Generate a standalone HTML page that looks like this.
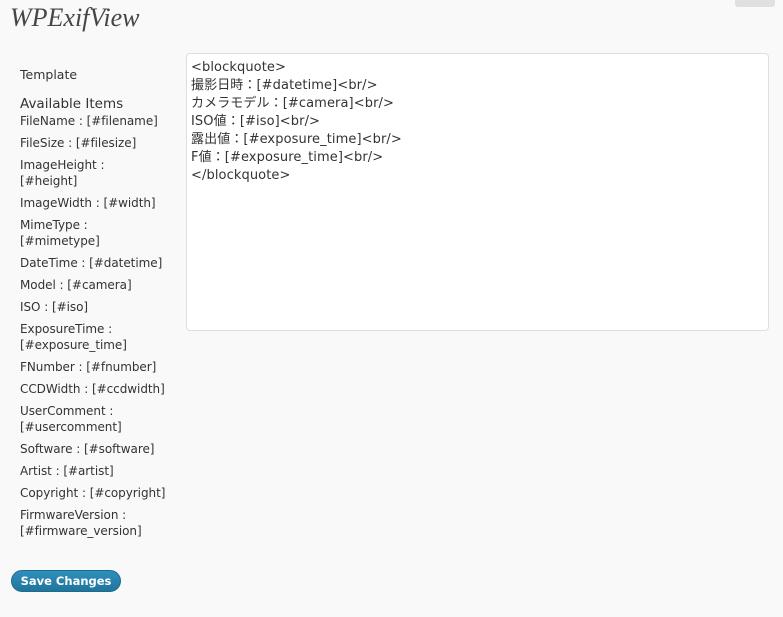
<!DOCTYPE html>
<html><head><meta charset="utf-8"><style>
body{margin:0;background:#f9f9f9;width:783px;height:617px;overflow:hidden;position:relative;font-family:"DejaVu Sans","Noto Sans CJK JP",sans-serif;color:#333;font-size:12px}
h2{position:absolute;left:10px;top:3px;margin:0;font-family:"Liberation Serif",serif;font-style:italic;font-weight:normal;font-size:26px;color:#464646}
.help{position:absolute;left:735px;top:-6px;width:40px;height:13px;background:#e0e0e0;border-radius:0 0 3px 3px}
.lab{position:absolute;left:20px}
.items{position:absolute;left:20px;top:113px;width:160px;letter-spacing:-0.05px}
.items div{line-height:16px;margin-bottom:6px}
.ta{position:absolute;left:186px;top:53px;width:583px;height:278px;background:#fff;border:1px solid #dfdfdf;border-radius:4px;box-sizing:border-box;padding:5px 4px;font-size:13px;line-height:18px;color:#333;white-space:pre;letter-spacing:0.1px}
.btn{position:absolute;left:11px;top:570px;width:110px;height:22px;border-radius:11px;background:linear-gradient(#2e8fbd,#21759b);border:1px solid #1e6a8d;box-sizing:border-box;color:#fff;font-weight:bold;font-size:11.5px;text-align:center;line-height:20px}
</style></head><body>
<h2>WPExifView</h2>
<div class="help"></div>
<div class="lab" style="top:67px;font-size:12.5px">Template</div>
<div class="lab" style="top:96px;font-size:13.5px">Available Items</div>
<div class="items">
<div>FileName : [#filename]</div>
<div>FileSize : [#filesize]</div>
<div>ImageHeight :<br>[#height]</div>
<div>ImageWidth : [#width]</div>
<div>MimeType :<br>[#mimetype]</div>
<div>DateTime : [#datetime]</div>
<div>Model : [#camera]</div>
<div>ISO : [#iso]</div>
<div>ExposureTime :<br>[#exposure_time]</div>
<div>FNumber : [#fnumber]</div>
<div>CCDWidth : [#ccdwidth]</div>
<div>UserComment :<br>[#usercomment]</div>
<div>Software : [#software]</div>
<div>Artist : [#artist]</div>
<div>Copyright : [#copyright]</div>
<div>FirmwareVersion :<br>[#firmware_version]</div>
</div>
<div class="ta">&lt;blockquote&gt;
撮影日時：[#datetime]&lt;br/&gt;
カメラモデル：[#camera]&lt;br/&gt;
ISO値：[#iso]&lt;br/&gt;
露出値：[#exposure_time]&lt;br/&gt;
F値：[#exposure_time]&lt;br/&gt;
&lt;/blockquote&gt;</div>
<div class="btn">Save Changes</div>
</body></html>
